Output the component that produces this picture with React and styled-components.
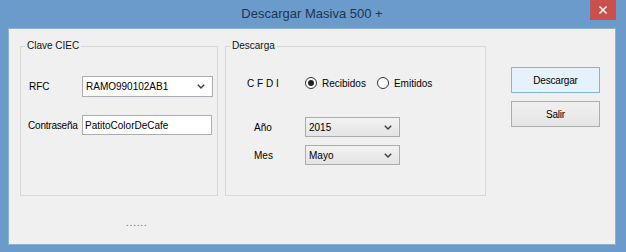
import React from 'react';
import styled, { createGlobalStyle } from 'styled-components';

const Global = createGlobalStyle`
  html, body { margin: 0; padding: 0; }
  body {
    width: 626px;
    height: 252px;
    overflow: hidden;
    background: #6b9bca;
    font-family: "Liberation Sans", Arial, sans-serif;
    font-size: 10px;
    color: #000;
  }
`;

const Window = styled.div`
  width: 626px;
  height: 252px;
  box-sizing: border-box;
  background: #6b9bca;
  display: flex;
  flex-direction: column;
  padding: 0 10px 7px 8px;
`;

const TitleBar = styled.div`
  height: 28px;
  display: grid;
  grid-template-columns: 26px 1fr 26px;
  align-items: start;
`;

const Title = styled.div`
  grid-column: 2;
  text-align: center;
  font-size: 13px;
  line-height: 28px;
  color: #1b3554;
`;

const Close = styled.div`
  grid-column: 3;
  height: 20px;
  background: #c9504c;
  display: flex;
  align-items: center;
  justify-content: center;
`;

const Client = styled.div`
  flex: 1;
  background: #f0f0f0;
  border: 1px solid #8fb2d3;
  display: flex;
  padding: 11px 0 0 11px;
`;

const LeftCol = styled.div`
  display: flex;
  flex-direction: column;
`;

const GroupsRow = styled.div`
  display: flex;
  gap: 7px;
`;

const Group = styled.fieldset`
  margin: 0;
  box-sizing: border-box;
  width: ${p => p.$w}px;
  height: 156px;
  border: 1px solid #d8d8d8;
  padding: ${p => p.$pt}px 0 0 0;
  display: flex;
  flex-direction: column;
  min-width: 0;
`;

const Legend = styled.legend`
  margin-left: 4px;
  padding: 0 2px;
  line-height: 12px;
  font-size: 10px;
  color: #111;
`;

const Row = styled.div`
  display: flex;
  align-items: center;
  height: ${p => p.$h || 20}px;
  margin-top: ${p => p.$mt || 0}px;
  padding-left: ${p => p.$pl || 0}px;
`;

const Label = styled.div`
  width: ${p => p.$w}px;
  flex: none;
  letter-spacing: ${p => p.$ls || 0}px;
  white-space: nowrap;
`;

const Combo = styled.div`
  box-sizing: border-box;
  width: ${p => p.$w}px;
  height: ${p => p.$h || 20}px;
  border: 1px solid ${p => (p.$editable ? '#abadb3' : '#acacac')};
  background: ${p => (p.$editable ? '#fff' : 'linear-gradient(#f2f2f2, #e4e4e4)')};
  display: flex;
  align-items: center;
  justify-content: space-between;
  padding: 0 7px 0 3px;
`;

const TextBox = styled.div`
  box-sizing: border-box;
  width: ${p => p.$w}px;
  height: 20px;
  border: 1px solid #abadb3;
  background: #fff;
  display: flex;
  align-items: center;
  padding: 0 2px;
`;

const RadioCircle = styled.span`
  box-sizing: border-box;
  width: 12px;
  height: 12px;
  border-radius: 50%;
  border: 1px solid #333;
  background: #fff;
  display: inline-flex;
  align-items: center;
  justify-content: center;
  flex: none;
  &::after {
    content: '';
    width: 6px;
    height: 6px;
    border-radius: 50%;
    background: ${p => (p.$checked ? '#222' : 'transparent')};
  }
`;

const RadioOption = styled.label`
  display: flex;
  align-items: center;
  gap: 5px;
  margin-right: ${p => p.$mr || 0}px;
`;

const Dots = styled.div`
  margin: 21px 0 0 106px;
  line-height: 12px;
  color: #666;
  letter-spacing: 0.8px;
`;

const ButtonCol = styled.div`
  display: flex;
  flex-direction: column;
  gap: 8px;
  margin: 27px 0 0 25px;
`;

const Button = styled.div`
  box-sizing: border-box;
  width: 89px;
  height: 26px;
  display: flex;
  align-items: center;
  justify-content: center;
  letter-spacing: -0.2px;
  border: 1px solid ${p => (p.$primary ? '#7eb4ea' : '#adadad')};
  background: ${p => (p.$primary ? '#e5f1fb' : 'linear-gradient(#f0f0f0, #e5e5e5)')};
`;

const Chevron = () => (
  <svg width="8" height="5" viewBox="0 0 8 5">
    <polyline points="0.8,0.8 4,4 7.2,0.8" fill="none" stroke="#3c3c3c" strokeWidth="1.4" />
  </svg>
);

const CloseX = () => (
  <svg width="8" height="8" viewBox="0 0 8 8">
    <line x1="0.5" y1="0.5" x2="7.5" y2="7.5" stroke="#fff" strokeWidth="1.4" />
    <line x1="7.5" y1="0.5" x2="0.5" y2="7.5" stroke="#fff" strokeWidth="1.4" />
  </svg>
);

export default function App() {
  return (
    <>
      <Global />
      <Window>
        <TitleBar>
          <Title>Descargar Masiva 500 +</Title>
          <Close><CloseX /></Close>
        </TitleBar>
        <Client>
          <LeftCol>
            <GroupsRow>
              <Group $w={198} $pt={24}>
                <Legend>Clave CIEC</Legend>
                <Row $h={21} $pl={8}>
                  <Label $w={53}>RFC</Label>
                  <Combo $w={131} $h={21} $editable>
                    <span>RAMO990102AB1</span>
                    <Chevron />
                  </Combo>
                </Row>
                <Row $mt={18} $pl={7}>
                  <Label $w={54} $ls={-0.2}>Contraseña</Label>
                  <TextBox $w={130}>PatitoColorDeCafe</TextBox>
                </Row>
              </Group>
              <Group $w={261} $pt={21}>
                <Legend>Descarga</Legend>
                <Row $pl={21}>
                  <Label $w={58}>C F D I</Label>
                  <RadioOption $mr={11}>
                    <RadioCircle $checked />
                    <span>Recibidos</span>
                  </RadioOption>
                  <RadioOption>
                    <RadioCircle />
                    <span>Emitidos</span>
                  </RadioOption>
                </Row>
                <Row $mt={24} $pl={28}>
                  <Label $w={51}>Año</Label>
                  <Combo $w={95}>
                    <span>2015</span>
                    <Chevron />
                  </Combo>
                </Row>
                <Row $mt={8} $pl={28}>
                  <Label $w={51}>Mes</Label>
                  <Combo $w={95}>
                    <span>Mayo</span>
                    <Chevron />
                  </Combo>
                </Row>
              </Group>
            </GroupsRow>
            <Dots>......</Dots>
          </LeftCol>
          <ButtonCol>
            <Button $primary>Descargar</Button>
            <Button>Salir</Button>
          </ButtonCol>
        </Client>
      </Window>
    </>
  );
}
